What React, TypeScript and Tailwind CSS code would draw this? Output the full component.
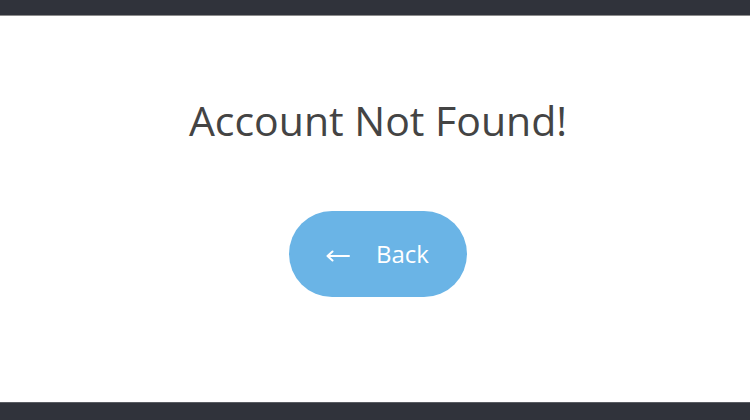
export default function App() {
  return (
    <div className="flex h-[420px] w-[750px] flex-col bg-white font-['Open_Sans',sans-serif]">
      <div className="h-[16px] shrink-0 border-b border-[#8c8c8c] bg-[#30333b]" />
      <main className="flex flex-1 flex-col items-center">
        <h1 className="mt-[84px] ml-[6px] text-[41px] leading-none font-normal text-[#444444]">
          Account Not Found!
        </h1>
        <button className="mt-[70px] ml-[5px] flex h-[86px] w-[178px] items-center justify-center gap-[26px] rounded-full bg-[#6ab4e6] text-[24px] text-white">
          <svg width="24" height="12" viewBox="0 0 24 12" fill="none" className="mt-[3px]">
            <path d="M23 6H2M6.5 1.5L1.5 6l5 4.5" stroke="white" strokeWidth="2" strokeLinecap="round" strokeLinejoin="round" />
          </svg>
          <span>Back</span>
        </button>
      </main>
      <div className="h-[18px] shrink-0 border-t border-[#5a5d63] bg-[#30333b]" />
    </div>
  );
}
